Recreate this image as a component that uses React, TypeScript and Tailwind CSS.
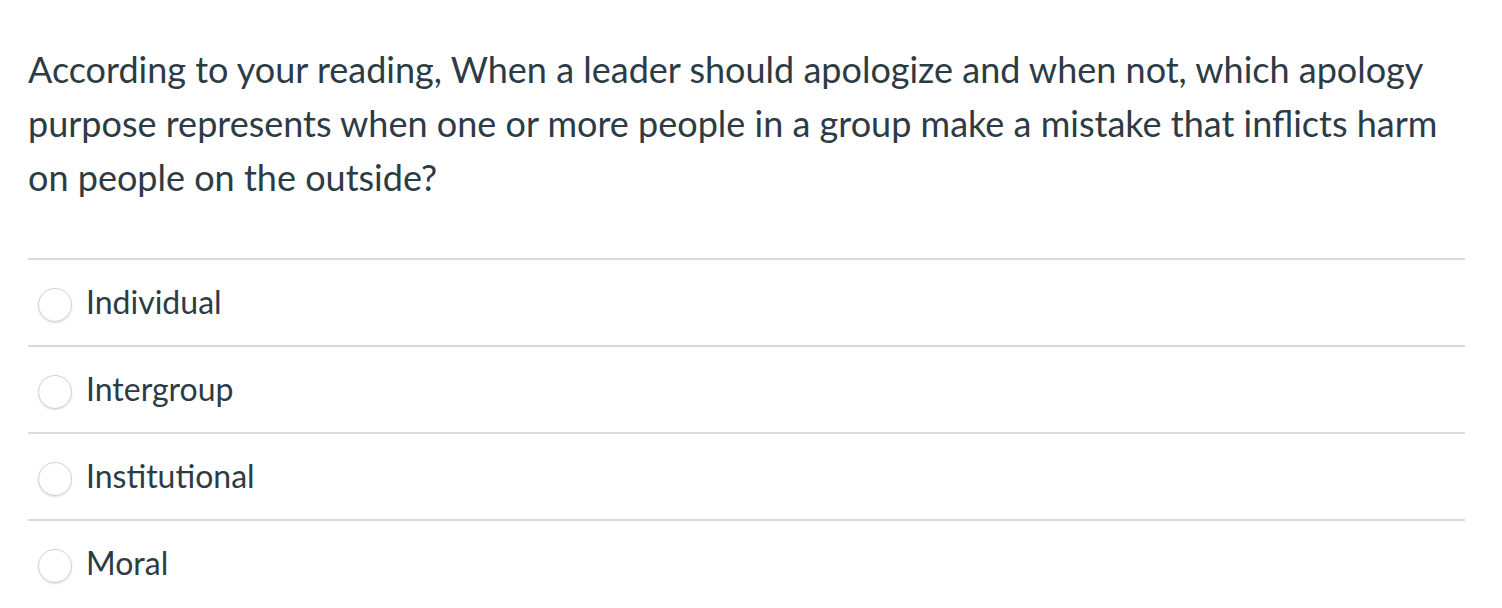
import React from "react";

const options = ["Individual", "Intergroup", "Institutional", "Moral"];

export default function App() {
  return (
    <div className="w-[1502px] h-[608px] bg-white overflow-hidden" style={{ fontFamily: "Lato, 'Noto Sans', sans-serif" }}>
      <div className="pl-[28px] w-[1465px] pt-[42px]">
        <p className="text-[36px] leading-[54px] text-[#2d3b45] w-[1420px]">
          According to your reading, When a leader should apologize and when not, which apology purpose represents when one or more people in a group make a mistake that inflicts harm on people on the outside?
        </p>
        <div className="mt-[54px]">
          {options.map((o) => (
            <div key={o} className="border-t-2 border-[#dadada] h-[87px] flex items-center">
              <div className="ml-[10px] w-[34px] h-[34px] rounded-full border border-[#d4d4d4] bg-white shadow-[0_1px_2px_rgba(0,0,0,0.12),inset_0_-1px_1px_rgba(0,0,0,0.04)] mt-[5px]" />
              <span className="ml-[14px] mb-[2px] text-[32px] text-[#2d3b45]">{o}</span>
            </div>
          ))}
        </div>
      </div>
    </div>
  );
}
